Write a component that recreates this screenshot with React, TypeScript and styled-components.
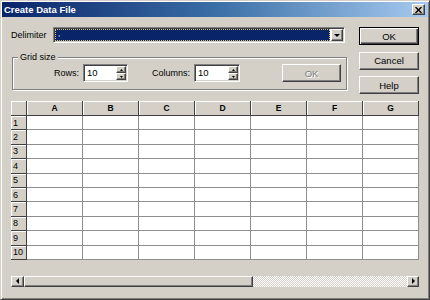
import { Fragment } from "react";
import { createGlobalStyle, styled, css } from "styled-components";

const Global = createGlobalStyle`
  html, body {
    margin: 0;
    padding: 0;
    background: #d4d0c8;
  }
`;

const raised = css`
  box-sizing: border-box;
  background: #d4d0c8;
  border: 1px solid;
  border-color: #fff #404040 #404040 #fff;
  box-shadow: inset -1px -1px 0 #808080;
`;

const sunken = css`
  box-sizing: border-box;
  border: 1px solid;
  border-color: #808080 #fff #fff #808080;
  box-shadow: inset 1px 1px 0 #404040, inset -1px -1px 0 #d4d0c8;
  padding: 1px;
`;

const Dialog = styled.div`
  width: 430px;
  height: 300px;
  box-sizing: border-box;
  background: #d4d0c8;
  border: 1px solid;
  border-color: #d4d0c8 #404040 #404040 #d4d0c8;
  box-shadow: inset 1px 1px 0 #fff, inset -1px -1px 0 #808080;
  padding: 1px;
  display: flex;
  flex-direction: column;
  font-family: "Liberation Sans", Arial, sans-serif;
  font-size: 9px;
  color: #000;
`;

const TitleBar = styled.div`
  height: 15px;
  display: flex;
  align-items: center;
  justify-content: space-between;
  padding: 0 3px 0 2px;
  background: linear-gradient(90deg, #0a246a 0%, #3a6ea5 50%, #a6caf0 100%);
  color: #fff;
  font-weight: bold;
  font-size: 9.5px;
`;

const CloseBtn = styled.div`
  ${raised};
  width: 13px;
  height: 11px;
  display: flex;
  align-items: center;
  justify-content: center;
`;

const Body = styled.div`
  padding: 10px 9px 0 9px;
  display: flex;
  flex-direction: column;
`;

const Top = styled.div`
  display: grid;
  grid-template-columns: 336px 60px;
  column-gap: 12px;
  align-items: start;
`;

const LeftCol = styled.div`
  display: flex;
  flex-direction: column;
`;

const DelimRow = styled.div`
  display: flex;
  align-items: center;
  height: 16px;
`;

const Label = styled.span<{ $w?: number }>`
  width: ${(p) => (p.$w ? `${p.$w}px` : "auto")};
  flex: none;
`;

const Combo = styled.div`
  ${sunken};
  flex: 1;
  margin-right: 2px;
  height: 16px;
  display: flex;
  background: #fff;
`;

const Selected = styled.div`
  flex: 1;
  margin-right: 1px;
  background: #0a246a;
  outline: 1px dotted #d8c070;
  outline-offset: -1px;
  color: #fff;
  font-size: 8px;
  line-height: 10px;
  padding-left: 3px;
`;

const DropBtn = styled.div`
  ${raised};
  width: 12px;
  display: flex;
  align-items: center;
  justify-content: center;
`;

const GroupBox = styled.div`
  position: relative;
  margin: 14px 0 0 1px;
  border: 1px solid #808080;
  box-shadow: 1px 1px 0 #fff, inset 1px 1px 0 #fff;
  padding: 6px 5px 7px 1px;
`;

const Caption = styled.span`
  position: absolute;
  top: -6px;
  left: 5px;
  padding: 0 2px;
  line-height: 11px;
  background: #d4d0c8;
`;

const FieldRow = styled.div`
  display: grid;
  grid-template-columns: 69px 45px 66px 46px 1fr 59px;
  align-items: center;
`;

const FieldLabel = styled.span`
  text-align: right;
  padding-right: 4px;
`;

const SpinBox = styled.div`
  ${sunken};
  height: 18px;
  display: flex;
  background: #fff;
`;

const SpinValue = styled.div`
  flex: 1;
  padding-left: 2px;
  font-size: 9.5px;
  line-height: 14px;
`;

const SpinBtns = styled.div`
  width: 10px;
  display: flex;
  flex-direction: column;
`;

const SpinBtn = styled.div`
  ${raised};
  flex: 1;
  display: flex;
  align-items: center;
  justify-content: center;
`;

const Button = styled.div<{ $default?: boolean; $disabled?: boolean }>`
  ${raised};
  height: 18px;
  display: flex;
  align-items: center;
  justify-content: center;
  font-size: 9.5px;
  color: ${(p) => (p.$disabled ? "#808080" : "#000")};
  text-shadow: ${(p) => (p.$disabled ? "1px 1px 0 #fff" : "none")};
  ${(p) =>
    p.$default &&
    css`
      border-color: #000;
      box-shadow: inset 1px 1px 0 #fff, inset -1px -1px 0 #404040,
        inset -2px -2px 0 #808080;
    `}
`;

const RightCol = styled.div`
  display: flex;
  flex-direction: column;
  gap: 6.5px;
`;

const Sheet = styled.div`
  margin-top: 7px;
  display: grid;
  grid-template-columns: 16px repeat(7, 56px);
  grid-template-rows: 15px repeat(10, 14.4px);
  background: #fff;
`;

const HeadCell = styled.div<{ $row?: boolean }>`
  box-sizing: border-box;
  background: #d4d0c8;
  border-right: 1px solid #404040;
  border-bottom: 1px solid #404040;
  box-shadow: inset 1px 1px 0 #fff;
  display: flex;
  align-items: center;
  justify-content: ${(p) => (p.$row ? "flex-start" : "center")};
  padding-left: ${(p) => (p.$row ? "2px" : "0")};
  font-weight: ${(p) => (p.$row ? "normal" : "bold")};
  font-size: ${(p) => (p.$row ? "9px" : "8.5px")};
`;

const Cell = styled.div`
  box-sizing: border-box;
  background: #fff;
  border-right: 1px solid #8e8e8e;
  border-bottom: 1px solid #8e8e8e;
`;

const ScrollBar = styled.div`
  margin-top: 16px;
  height: 11px;
  display: flex;
`;

const ArrowBtn = styled.div<{ $w: number }>`
  ${raised};
  width: ${(p) => p.$w}px;
  display: flex;
  align-items: center;
  justify-content: center;
`;

const Thumb = styled.div`
  ${raised};
  width: 229px;
`;

const Track = styled.div`
  flex: 1;
  background: repeating-conic-gradient(#fff 0 25%, #d4d0c8 0 50%) 0 0 / 2px 2px;
`;

function Tri({ dir }: { dir: "up" | "down" | "left" | "right" }) {
  const pts = {
    up: "0,3 3,0 6,3",
    down: "0,0 6,0 3,3",
    left: "3,0 3,6 0,3",
    right: "0,0 0,6 3,3",
  }[dir];
  const w = dir === "up" || dir === "down" ? 6 : 3;
  const h = dir === "up" || dir === "down" ? 3 : 6;
  return (
    <svg width={w} height={h} viewBox={`0 0 ${w} ${h}`}>
      <polygon points={pts} fill="#000" />
    </svg>
  );
}

function Spin({ value }: { value: string }) {
  return (
    <SpinBox>
      <SpinValue>{value}</SpinValue>
      <SpinBtns>
        <SpinBtn>
          <svg width="3" height="2" viewBox="0 0 3 2">
            <polygon points="0,2 1.5,0 3,2" fill="#000" />
          </svg>
        </SpinBtn>
        <SpinBtn>
          <svg width="3" height="2" viewBox="0 0 3 2">
            <polygon points="0,0 3,0 1.5,2" fill="#000" />
          </svg>
        </SpinBtn>
      </SpinBtns>
    </SpinBox>
  );
}

const cols = ["A", "B", "C", "D", "E", "F", "G"];
const rows = Array.from({ length: 10 }, (_, i) => i + 1);

export default function App() {
  return (
    <>
      <Global />
      <Dialog>
        <TitleBar>
          <span>Create Data File</span>
          <CloseBtn>
            <svg width="7" height="6" viewBox="0 0 7 6">
              <path d="M0.5 0 L6.5 6 M6.5 0 L0.5 6" stroke="#000" strokeWidth="1.4" />
            </svg>
          </CloseBtn>
        </TitleBar>
        <Body>
          <Top>
            <LeftCol>
              <DelimRow>
                <Label $w={42}>Delimiter</Label>
                <Combo>
                  <Selected>,</Selected>
                  <DropBtn>
                    <Tri dir="down" />
                  </DropBtn>
                </Combo>
              </DelimRow>
              <GroupBox>
                <Caption>Grid size</Caption>
                <FieldRow>
                  <FieldLabel>Rows:</FieldLabel>
                  <Spin value="10" />
                  <FieldLabel>Columns:</FieldLabel>
                  <Spin value="10" />
                  <span />
                  <Button $disabled>OK</Button>
                </FieldRow>
              </GroupBox>
            </LeftCol>
            <RightCol>
              <Button $default>OK</Button>
              <Button>Cancel</Button>
              <Button>Help</Button>
            </RightCol>
          </Top>
          <Sheet>
            <HeadCell />
            {cols.map((c) => (
              <HeadCell key={c}>{c}</HeadCell>
            ))}
            {rows.map((r) => (
              <Fragment key={r}>
                <HeadCell $row>{r}</HeadCell>
                {cols.map((c) => (
                  <Cell key={c} />
                ))}
              </Fragment>
            ))}
          </Sheet>
          <ScrollBar>
            <ArrowBtn $w={13}>
              <Tri dir="left" />
            </ArrowBtn>
            <Thumb />
            <Track />
            <ArrowBtn $w={12}>
              <Tri dir="right" />
            </ArrowBtn>
          </ScrollBar>
        </Body>
      </Dialog>
    </>
  );
}
